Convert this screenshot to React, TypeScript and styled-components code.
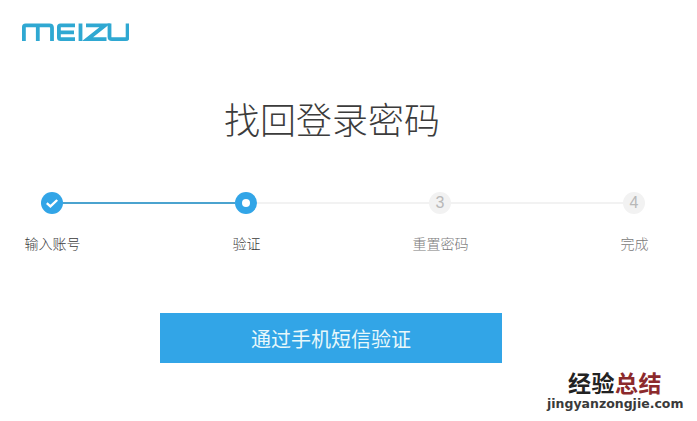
import React from 'react';
import styled, { createGlobalStyle } from 'styled-components';

const GlobalStyle = createGlobalStyle`
  html, body {
    margin: 0;
    padding: 0;
    background: #fff;
  }
  body {
    font-family: "Liberation Sans", "Noto Sans CJK SC", sans-serif;
  }
`;

const Page = styled.div`
  position: relative;
  width: 697px;
  height: 421px;
  overflow: hidden;
  background: #fff;
  padding-top: 22px;
  box-sizing: border-box;
`;

const Logo = styled.svg`
  display: block;
  width: 108px;
  height: 20px;
  margin-left: 21px;
`;

const Title = styled.h1`
  margin: 57px 0 0;
  width: 664px;
  text-align: center;
  font-size: 36px;
  line-height: 46px;
  font-weight: 300;
  color: #3c3c3c;
`;

const Track = styled.div`
  display: flex;
  align-items: center;
  width: 604px;
  margin: 47px 0 0 41px;
`;

const Node = styled.div<{ $state: 'done' | 'active' | 'todo' }>`
  flex: none;
  width: 22px;
  height: 22px;
  border-radius: 50%;
  display: flex;
  align-items: center;
  justify-content: center;
  box-sizing: border-box;
  background: ${p => (p.$state === 'todo' ? '#f2f2f2' : '#32a5e7')};
  color: #b8b8b8;
  font-size: 16px;
`;

const Dot = styled.span`
  width: 8px;
  height: 8px;
  border-radius: 50%;
  background: #fff;
`;

const Connector = styled.div<{ $on?: boolean }>`
  flex: 1;
  height: 2px;
  background: ${p => (p.$on ? '#4ba3cf' : '#f2f2f2')};
`;

const Labels = styled.div`
  display: flex;
  gap: 114px;
  margin: 20px 0 0 12.5px;
`;

const Label = styled.div<{ $muted?: boolean }>`
  width: 80px;
  text-align: center;
  font-size: 14px;
  line-height: 20px;
  font-weight: 300;
  color: ${p => (p.$muted ? '#7a7a7a' : '#3a3a3a')};
`;

const Action = styled.button`
  display: block;
  width: 342px;
  height: 50px;
  margin: 59px 0 0 160px;
  padding: 0;
  border: 0;
  background: #32a5e7;
  color: #e8f8fb;
  font-family: inherit;
  font-size: 20px;
  cursor: pointer;
`;

const Watermark = styled.div`
  position: absolute;
  right: 14px;
  bottom: 10px;
  width: 136px;
  text-align: center;
`;

const MarkTitle = styled.div`
  font-size: 23px;
  line-height: 25px;
  font-weight: 700;
  color: #222;
  letter-spacing: 0.5px;
`;

const MarkAccent = styled.span`
  color: #8c2a2c;
`;

const MarkUrl = styled.div`
  font-family: "DejaVu Sans", sans-serif;
  font-size: 12.5px;
  line-height: 14px;
  font-weight: 700;
  color: #3a3a3a;
  white-space: nowrap;
`;

const steps = [
  { label: '输入账号', state: 'done' as const },
  { label: '验证', state: 'active' as const },
  { label: '重置密码', state: 'todo' as const },
  { label: '完成', state: 'todo' as const },
];

const App: React.FC = () => (
  <Page>
    <GlobalStyle />
    <Logo viewBox="0 0 108 20" fill="none" stroke="#2fa8d2" strokeWidth="3.8" aria-label="MEIZU">
      <path d="M2.9 19V5Q2.9 3.3 4.6 3.3H28.5Q31 3.3 31 5.8V19M16.8 3.3V19" />
      <path d="M54 3.3H39.5Q37.9 3.3 37.9 5V15.5Q37.9 17.2 39.6 17.2H54M37.9 10.3H53" />
      <path d="M59.5 1.5V19" />
      <path d="M65 3.3H84L66.5 17.2H85.5" />
      <path d="M88.5 1.5V15Q88.5 17.2 91 17.2H105Q106.6 17.2 106.6 15.2V1.5" />
    </Logo>
    <Title>找回登录密码</Title>
    <Track>
      <Node $state="done">
        <svg width="14" height="14" viewBox="0 0 14 14" fill="none" stroke="#fff" strokeWidth="2.4">
          <path d="M1.8 7.2 5.4 10.4 12.2 4" />
        </svg>
      </Node>
      <Connector $on />
      <Node $state="active"><Dot /></Node>
      <Connector />
      <Node $state="todo">3</Node>
      <Connector />
      <Node $state="todo">4</Node>
    </Track>
    <Labels>
      {steps.map(s => (
        <Label key={s.label} $muted={s.state === 'todo'}>{s.label}</Label>
      ))}
    </Labels>
    <Action>通过手机短信验证</Action>
    <Watermark>
      <MarkTitle>经验<MarkAccent>总结</MarkAccent></MarkTitle>
      <MarkUrl>jingyanzongjie.com</MarkUrl>
    </Watermark>
  </Page>
);

export default App;
